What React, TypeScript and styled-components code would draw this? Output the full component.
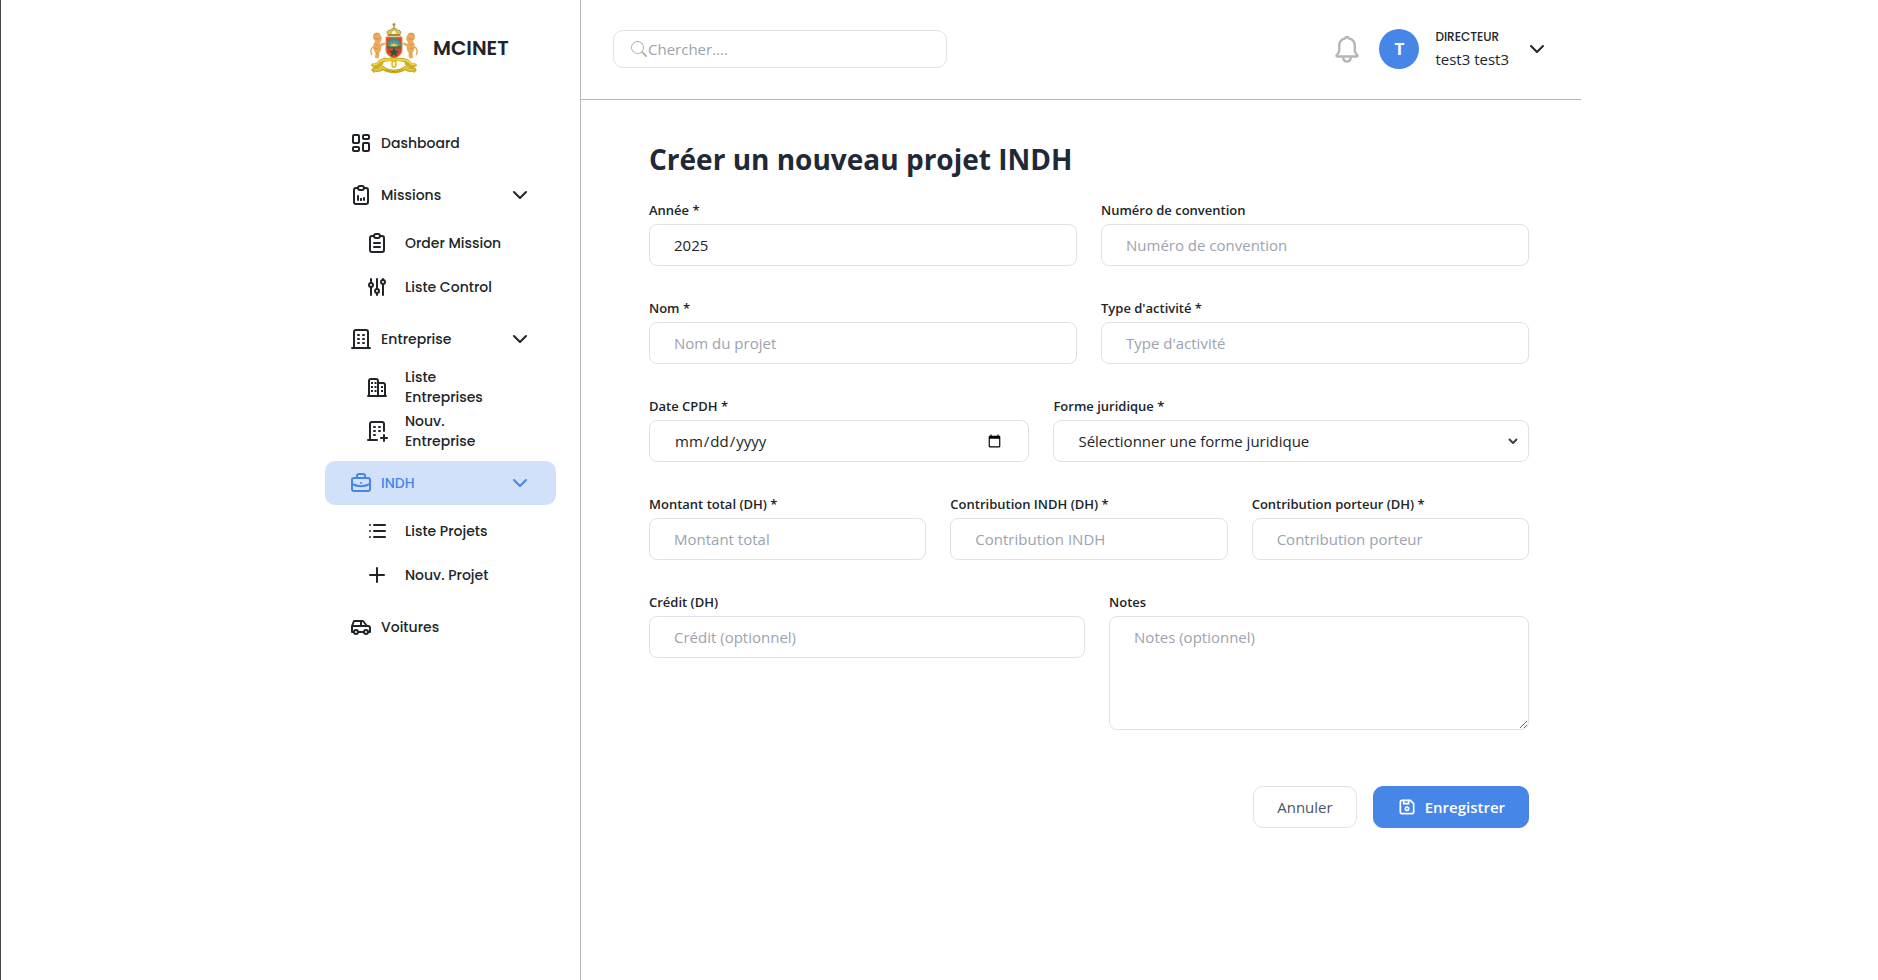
import React from 'react';
import styled, { createGlobalStyle, css } from 'styled-components';
import {
  TbAdjustments,
  TbBriefcase,
  TbBuilding,
  TbCar,
  TbChevronDown,
  TbClipboardData,
  TbClipboardText,
  TbDeviceFloppy,
  TbLayoutDashboard,
  TbList,
  TbPlus,
} from 'react-icons/tb';
import { BsSearch } from 'react-icons/bs';

const bodyFont = '"Segoe UI", "Open Sans", "Noto Sans", sans-serif';
const brandFont = 'Poppins, Inter, "Liberation Sans", sans-serif';

const color = {
  ink: '#212529',
  title: '#1f2937',
  muted: '#9ca3af',
  icon: '#b6b6b6',
  line: '#b6b6b6',
  border: '#dfe1e7',
  primary: '#4686e6',
  primarySoft: '#d1e1f9',
};

const GlobalStyle = createGlobalStyle`
  *, *::before, *::after { box-sizing: border-box; }
  body {
    margin: 0;
    background: #fff;
    color: ${color.ink};
    font-family: ${bodyFont};
    font-size: 15px;
    line-height: 24px;
  }
  button, input, select, textarea { font: inherit; color: inherit; }
`;

const Page = styled.div`
  display: flex;
  justify-content: center;
  min-height: 100vh;
  border-left: 1px solid #45454d;
  padding-left: 3px;
`;

const Shell = styled.div`
  display: flex;
  width: 100%;
  max-width: 1280px;
`;

const Sidebar = styled.aside`
  flex: 0 0 280px;
  border-right: 1px solid ${color.line};
  padding: 0 24px;
  font-family: ${brandFont};
`;

const Brand = styled.a`
  display: flex;
  align-items: center;
  gap: 15px;
  height: 96px;
  margin-bottom: 25px;
  padding-left: 45px;
  color: ${color.ink};
  font-size: 20px;
  font-weight: 600;
  text-decoration: none;
`;

const NavList = styled.ul`
  display: flex;
  flex-direction: column;
  gap: 8px;
  margin: 0;
  padding: 0;
  list-style: none;
`;

const SubList = styled.ul`
  margin: 4px 0 0;
  padding: 0;
  list-style: none;
`;

const navRow = css`
  display: flex;
  align-items: center;
  width: 100%;
  height: 44px;
  border: 0;
  border-radius: 10px;
  background: none;
  color: ${color.ink};
  font-family: ${brandFont};
  font-size: 14px;
  font-weight: 500;
  line-height: 20px;
  text-align: left;
  text-decoration: none;
  cursor: pointer;

  svg {
    flex: none;
    width: 24px;
    height: 24px;
  }
`;

const NavLink = styled.a`
  ${navRow}
  gap: 8px;
  padding: 0 24px;
`;

const NavToggle = styled.button<{ $active?: boolean }>`
  ${navRow}
  gap: 8px;
  padding: 0 24px;
  ${(p) => p.$active && `background: ${color.primarySoft}; color: ${color.primary};`}

  span { flex: 1; }
`;

const SubLink = styled.a`
  ${navRow}
  gap: 16px;
  padding: 0 40px;
`;

const Main = styled.div`
  flex: 1;
  min-width: 0;
`;

const TopBar = styled.header`
  display: flex;
  align-items: center;
  justify-content: space-between;
  height: 100px;
  border-bottom: 1px solid ${color.line};
  padding: 0 32px 2px;
`;

const SearchBox = styled.label`
  display: flex;
  align-items: center;
  gap: 1px;
  width: 334px;
  height: 38px;
  border: 1px solid ${color.border};
  border-radius: 10px;
  padding: 0 17px;
  color: ${color.icon};

  svg { flex: none; }
`;

const SearchInput = styled.input`
  flex: 1;
  min-width: 0;
  border: 0;
  outline: 0;
  padding: 0;
  background: none;
  color: ${color.ink};

  &::placeholder { color: ${color.muted}; opacity: 1; }
`;

const Account = styled.div`
  display: flex;
  align-items: center;
  gap: 20px;
`;

const PlainButton = styled.button`
  display: flex;
  align-items: center;
  gap: 16px;
  border: 0;
  padding: 0;
  background: none;
  text-align: left;
  cursor: pointer;
`;

const Avatar = styled.span`
  display: grid;
  place-items: center;
  width: 40px;
  height: 40px;
  border-radius: 50%;
  background: ${color.primary};
  color: #fff;
  font-family: ${brandFont};
  font-size: 18px;
  font-weight: 600;
`;

const Identity = styled.span`
  display: flex;
  flex-direction: column;
`;

const Role = styled.span`
  font-family: ${brandFont};
  font-size: 12px;
  font-weight: 500;
  line-height: 20px;
`;

const Form = styled.form`
  padding: 39px 52px 32px 68px;
`;

const Title = styled.h1`
  margin: 0 0 21px;
  color: ${color.title};
  font-size: 28px;
  font-weight: 700;
  line-height: 40px;
`;

const Row = styled.div<{ $columns: string }>`
  display: grid;
  grid-template-columns: ${(p) => p.$columns};
  align-items: start;
  gap: 24px;
  margin-bottom: 32px;
`;

const FieldBox = styled.div`
  display: flex;
  flex-direction: column;
  gap: 4px;
  min-width: 0;
`;

const Label = styled.label`
  font-size: 13px;
  font-weight: 600;
  line-height: 20px;
`;

const control = css`
  width: 100%;
  border: 1px solid ${color.border};
  border-radius: 8px;
  padding: 8px 24px;
  background: #fff;
  line-height: 24px;

  &::placeholder { color: ${color.muted}; opacity: 1; }
`;

const Input = styled.input`
  ${control}
  height: 42px;
`;

const SelectBox = styled.div`
  position: relative;

  svg {
    position: absolute;
    top: 50%;
    right: 11px;
    transform: translateY(-50%);
    color: #374151;
    pointer-events: none;
  }
`;

const Select = styled.select`
  ${control}
  display: block;
  height: 42px;
  appearance: none;
`;

const TextArea = styled.textarea`
  ${control}
  display: block;
  height: 114px;
  resize: vertical;
`;

const Actions = styled.div`
  display: flex;
  justify-content: flex-end;
  gap: 16px;
  margin-top: 56px;
`;

const Button = styled.button<{ $primary?: boolean }>`
  display: flex;
  align-items: center;
  gap: 8px;
  height: 42px;
  border: 1px solid ${(p) => (p.$primary ? color.primary : color.border)};
  border-radius: 10px;
  padding: 0 23px;
  background: ${(p) => (p.$primary ? color.primary : '#fff')};
  color: ${(p) => (p.$primary ? '#fff' : '#4b5563')};
  font-weight: ${(p) => (p.$primary ? 600 : 400)};
  cursor: pointer;
`;

const Stroke = ({ children }: { children: React.ReactNode }) => (
  <svg viewBox="0 0 24 24" fill="none" stroke="currentColor" strokeWidth="2" strokeLinecap="round" strokeLinejoin="round" aria-hidden="true">
    {children}
  </svg>
);

const BuildingsIcon = () => (
  <Stroke>
    <path d="M3 21h18M4 21V6a2 2 0 0 1 2-2h5a2 2 0 0 1 2 2v15M13 8h5a2 2 0 0 1 2 2v11" />
    <path d="M6 7h2v2H6zM9.500 7h2v2h-2zM6 11h2v2H6zM9.500 11h2v2h-2zM6 15h2v2H6zM9.500 15h2v2h-2zM16 11h2v2h-2zM16 15h2v2h-2z" fill="currentColor" stroke="none" />
  </Stroke>
);

const BuildingPlusIcon = () => (
  <Stroke>
    <path d="M3 21h9M5 21V5a2 2 0 0 1 2-2h10a2 2 0 0 1 2 2v7M16 19h6M19 16v6" />
    <path d="M9 8h1M9 12h1M9 16h1M14 8h1M14 12h1" />
  </Stroke>
);

const BellIcon = () => (
  <svg width="24" height="28" viewBox="0 0 24 28" fill="none" stroke={color.icon} strokeWidth="2.400" strokeLinecap="round" strokeLinejoin="round" aria-hidden="true">
    <path d="M12 2c-1 0-1.500.6-1.700 1.400C6.500 4.200 4.200 7.300 4.200 11v4.500c0 2.200-.8 3.200-2.200 4.300-.9.800-.6 1.700.5 1.700h19c1.100 0 1.400-.9.500-1.700-1.400-1.100-2.200-2.100-2.200-4.300V11c0-3.700-2.300-6.800-6.100-7.600C13.500 2.600 13 2 12 2z" />
    <path d="M8 22c.4 2.900 1.900 4.600 4 4.600s3.600-1.700 4-4.600" />
  </svg>
);

const Lion = () => (
  <g>
    <path d="M7 9.500c-2.500.2-4.300 1.800-4 4.500.2 2 1 3.200 2.200 4-1.400 2.400-2.400 4.700-2 7.200.4 2.500 2.600 3.500 2.300 5.800-.2 1.500-1 2.500-.5 4l3.200.5c1.200-1.800 1.500-3.600 1-5.500 1.700-2 2.400-4.200 2-6.500l4.300-2.500-.8-1.500-4.700 1.200c-.3-1.400.7-2.200 1.600-3.700.8-3-1.200-6.500-4.600-7.500z" fill="#ecaa5a" />
    <path d="M4 11.500c2-1.500 4.500-1.500 6 0M4 15c1.500 1.300 3.500 1.700 5.500.5M5.500 21l2.500 1.500M4.800 25l3.200 1M5.800 29.500l2.500 1.500" stroke="#c58a48" fill="none" strokeWidth=".7" />
    <path d="M3.500 24C.5 25 .2 29 2 32" stroke="#dc9d4c" fill="none" strokeWidth="1.300" />
  </g>
);

const Emblem = () => (
  <svg width="48" height="52" viewBox="0 -1 48 52" aria-hidden="true">
    <Lion />
    <g transform="translate(48 0) scale(-1 1)"><Lion /></g>
    <path d="M24 0v5M22.500 1.500h3" stroke="#b68a16" strokeWidth="1.300" />
    <path d="M18 11.500c-2-2.600 0-4.800 2.500-4.300 1-2.400 6-2.400 7 0 2.500-.5 4.500 1.700 2.500 4.300z" fill="#dcc66c" stroke="#9a7a1b" strokeWidth=".8" />
    <path d="M21 11c0-2 1-3.500 3-4 2 .5 3 2 3 4" fill="#fff4c0" stroke="#9a7a1b" strokeWidth=".6" />
    <path d="M17.500 12.300h13" stroke="#a8843c" strokeWidth="1.300" />
    <path d="M16 14h16v13c0 4-3.500 6.500-8 8.500-4.500-2-8-4.500-8-8.500z" fill="#e6402b" stroke="#c99a35" strokeWidth="1" />
    <path d="M16.500 23.500c1-5.500 4-8.500 7.500-8.500s6.500 3 7.500 8.500z" fill="#3b8e93" />
    <path d="M24 24v-6.500M24 24l-3.500-5.500M24 24l3.500-5.500M24 24l-5.500-3M24 24l5.500-3" stroke="#a9bb6c" strokeWidth=".8" />
    <path d="M20 23.500c1-2.200 2.600-3 4-3s3 .8 4 3z" fill="#e3cd4b" />
    <path d="M17 23.500h14v2H17z" fill="#3c6e52" />
    <path d="M24 24.500l1.400 3.300 3.600.2-2.800 2.200 1 3.300-3.200-2-3.200 2 1-3.300-2.800-2.200 3.600-.2z" fill="#1b5c45" />
    <path d="M2 41c2 2 5 1.500 7-1.500 2.500-3 7-3 15-3s12.500 0 15 3c2 3 5 3.500 7 1.500" fill="none" stroke="#c5a51c" strokeWidth="3.600" />
    <path d="M2.500 40.700c2 1.600 4.500 1.100 6.200-1.400 2.500-3.100 7.300-2.800 15.300-2.800s12.800-.3 15.300 2.800c1.700 2.500 4.200 3 6.200 1.400" fill="none" stroke="#ecd548" strokeWidth="1.800" />
    <path d="M12 39c0 4-5 4.500-8 7M36 39c0 4 5 4.500 8 7" fill="none" stroke="#cdb02a" strokeWidth="3.400" />
    <path d="M2 46c3 1.500 7 2 11-1 6 4.500 16 4.500 22 0 4 3 8 2.500 11 1" fill="none" stroke="#c5a51c" strokeWidth="3.600" />
    <path d="M3 46.200c3.500 1.400 6.500 1 10-1.400 6 4.500 16 4.500 22 0 3.500 2.400 6.500 2.800 10 1.400" fill="none" stroke="#e6cb38" strokeWidth="1.700" />
    <path d="M15.500 46.500c5 2.600 12 2.600 17 0" fill="none" stroke="#77701f" strokeWidth=".8" strokeDasharray="1.200 .5" />
    <path d="M3 47l1 2.500M45 47l-1 2.500" stroke="#c5a51c" strokeWidth="2" />
    <path d="M14 42.500c2-2.500 5-3.500 7-3M34 42.500c-2-2.500-5-3.500-7-3" stroke="#fdfae8" strokeWidth="2" fill="none" />
    <ellipse cx="24" cy="41" rx="2" ry="3.200" fill="#fff6c9" stroke="#d6b91c" strokeWidth="1.400" />
  </svg>
);

type Child = { label: string; icon: React.ReactNode };
type Group = { label: string; icon: React.ReactNode; active?: boolean; children?: Child[] };

const navigation: Group[] = [
  { label: 'Dashboard', icon: <TbLayoutDashboard /> },
  {
    label: 'Missions',
    icon: <TbClipboardData />,
    children: [
      { label: 'Order Mission', icon: <TbClipboardText /> },
      { label: 'Liste Control', icon: <TbAdjustments /> },
    ],
  },
  {
    label: 'Entreprise',
    icon: <TbBuilding />,
    children: [
      { label: 'Liste Entreprises', icon: <BuildingsIcon /> },
      { label: 'Nouv. Entreprise', icon: <BuildingPlusIcon /> },
    ],
  },
  {
    label: 'INDH',
    icon: <TbBriefcase />,
    active: true,
    children: [
      { label: 'Liste Projets', icon: <TbList /> },
      { label: 'Nouv. Projet', icon: <TbPlus /> },
    ],
  },
  { label: 'Voitures', icon: <TbCar /> },
];

const Field = ({ id, label, children }: { id: string; label: string; children: React.ReactNode }) => (
  <FieldBox>
    <Label htmlFor={id}>{label}</Label>
    {children}
  </FieldBox>
);

export default function App() {
  return (
    <>
      <GlobalStyle />
      <Page>
        <Shell>
          <Sidebar>
            <Brand href="#">
              <Emblem />
              MCINET
            </Brand>
            <nav>
              <NavList>
                {navigation.map((item) => (
                  <li key={item.label}>
                    {item.children ? (
                      <>
                        <NavToggle type="button" $active={item.active} aria-expanded="true">
                          {item.icon}
                          <span>{item.label}</span>
                          <TbChevronDown />
                        </NavToggle>
                        <SubList>
                          {item.children.map((child) => (
                            <li key={child.label}>
                              <SubLink href="#">
                                {child.icon}
                                <span>{child.label}</span>
                              </SubLink>
                            </li>
                          ))}
                        </SubList>
                      </>
                    ) : (
                      <NavLink href="#">
                        {item.icon}
                        <span>{item.label}</span>
                      </NavLink>
                    )}
                  </li>
                ))}
              </NavList>
            </nav>
          </Sidebar>

          <Main>
            <TopBar>
              <SearchBox>
                <BsSearch size={16} />
                <SearchInput type="text" placeholder="Chercher...." aria-label="Chercher" />
              </SearchBox>
              <Account>
                <PlainButton type="button" aria-label="Notifications">
                  <BellIcon />
                </PlainButton>
                <PlainButton type="button">
                  <Avatar>T</Avatar>
                  <Identity>
                    <Role>DIRECTEUR</Role>
                    <span>test3 test3</span>
                  </Identity>
                  <TbChevronDown size={24} />
                </PlainButton>
              </Account>
            </TopBar>

            <Form>
              <Title>Créer un nouveau projet INDH</Title>
              <Row $columns="1fr 1fr">
                <Field id="annee" label="Année *">
                  <Input id="annee" type="text" defaultValue="2025" />
                </Field>
                <Field id="convention" label="Numéro de convention">
                  <Input id="convention" type="text" placeholder="Numéro de convention" />
                </Field>
              </Row>
              <Row $columns="1fr 1fr">
                <Field id="nom" label="Nom *">
                  <Input id="nom" type="text" placeholder="Nom du projet" />
                </Field>
                <Field id="activite" label="Type d'activité *">
                  <Input id="activite" type="text" placeholder="Type d'activité" />
                </Field>
              </Row>
              <Row $columns="4fr 5fr">
                <Field id="date" label="Date CPDH *">
                  <Input id="date" type="date" />
                </Field>
                <Field id="forme" label="Forme juridique *">
                  <SelectBox>
                    <Select id="forme" defaultValue="">
                      <option value="">Sélectionner une forme juridique</option>
                    </Select>
                    <svg width="10" height="6" viewBox="0 0 10 6" fill="none" stroke="currentColor" strokeWidth="2" aria-hidden="true">
                      <path d="M1 1l4 4 4-4" />
                    </svg>
                  </SelectBox>
                </Field>
              </Row>
              <Row $columns="1fr 1fr 1fr">
                <Field id="montant" label="Montant total (DH) *">
                  <Input id="montant" type="text" placeholder="Montant total" />
                </Field>
                <Field id="indh" label="Contribution INDH (DH) *">
                  <Input id="indh" type="text" placeholder="Contribution INDH" />
                </Field>
                <Field id="porteur" label="Contribution porteur (DH) *">
                  <Input id="porteur" type="text" placeholder="Contribution porteur" />
                </Field>
              </Row>
              <Row $columns="27fr 26fr">
                <Field id="credit" label="Crédit (DH)">
                  <Input id="credit" type="text" placeholder="Crédit (optionnel)" />
                </Field>
                <Field id="notes" label="Notes">
                  <TextArea id="notes" placeholder="Notes (optionnel)" />
                </Field>
              </Row>
              <Actions>
                <Button type="button">Annuler</Button>
                <Button type="submit" $primary>
                  <TbDeviceFloppy size={20} />
                  Enregistrer
                </Button>
              </Actions>
            </Form>
          </Main>
        </Shell>
      </Page>
    </>
  );
}
